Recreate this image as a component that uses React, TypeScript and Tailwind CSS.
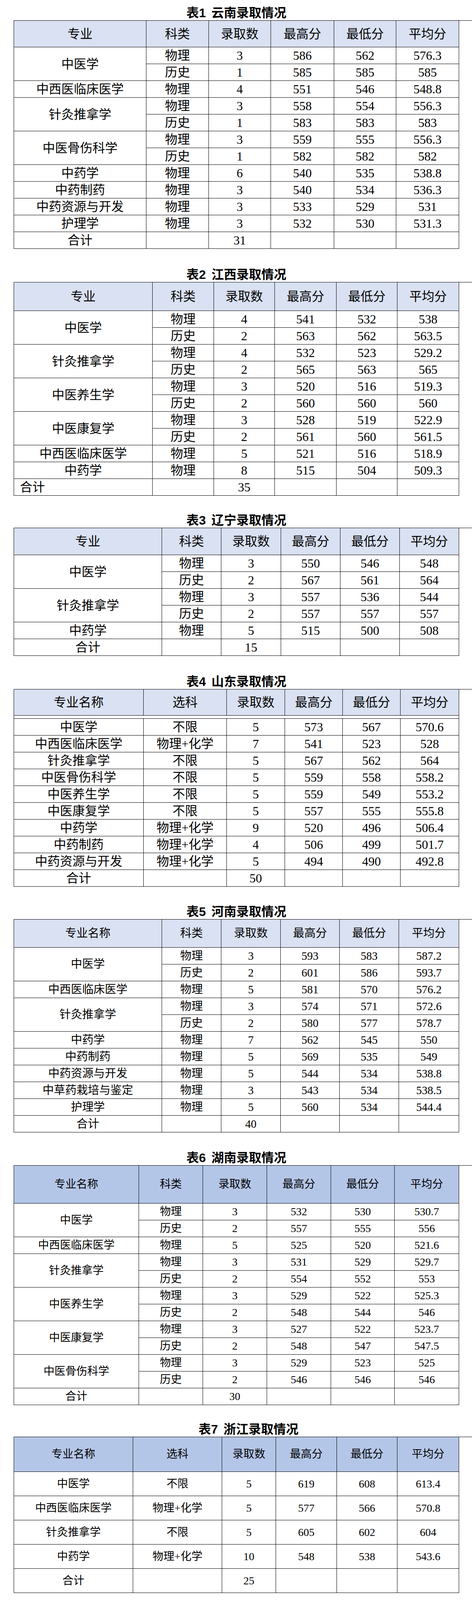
import clsx from 'clsx'

type Row = string[]
type Group = [string, Row[]]

type Sheet = {
  no: string
  name: string
  gap: string
  shift: boolean
  cols: string
  head: string[]
  headH: string
  headBg: string
  rowH: string
  size: string
  groups: Group[]
  total: string
  totalLeft: boolean
  spacer: boolean
}

const H6 = ['专业名称', '科类', '录取数', '最高分', '最低分', '平均分']
const HX = ['专业名称', '选科', '录取数', '最高分', '最低分', '平均分']

const sheets: Sheet[] = [
  {
    no: '1',
    name: '云南录取情况',
    gap: 'pt-[15px]',
    shift: false,
    cols: 'grid-cols-[339px_160px_159px_162px_159px_161px]',
    head: ['专业', '科类', '录取数', '最高分', '最低分', '平均分'],
    headH: 'h-[68px]',
    headBg: 'bg-[#d9e1f2]',
    rowH: 'h-[43px]',
    size: 'text-[32px]',
    groups: [
      ['中医学', [['物理', '3', '586', '562', '576.3'], ['历史', '1', '585', '585', '585']]],
      ['中西医临床医学', [['物理', '4', '551', '546', '548.8']]],
      ['针灸推拿学', [['物理', '3', '558', '554', '556.3'], ['历史', '1', '583', '583', '583']]],
      ['中医骨伤科学', [['物理', '3', '559', '555', '556.3'], ['历史', '1', '582', '582', '582']]],
      ['中药学', [['物理', '6', '540', '535', '538.8']]],
      ['中药制药', [['物理', '3', '540', '534', '536.3']]],
      ['中药资源与开发', [['物理', '3', '533', '529', '531']]],
      ['护理学', [['物理', '3', '532', '530', '531.3']]],
    ],
    total: '31',
    totalLeft: false,
    spacer: false,
  },
  {
    no: '2',
    name: '江西录取情况',
    gap: 'pt-[48px]',
    shift: false,
    cols: 'grid-cols-[355px_157px_156px_158px_156px_158px]',
    head: ['专业', '科类', '录取数', '最高分', '最低分', '平均分'],
    headH: 'h-[73px]',
    headBg: 'bg-[#d9e1f2]',
    rowH: 'h-[43px]',
    size: 'text-[32px]',
    groups: [
      ['中医学', [['物理', '4', '541', '532', '538'], ['历史', '2', '563', '562', '563.5']]],
      ['针灸推拿学', [['物理', '4', '532', '523', '529.2'], ['历史', '2', '565', '563', '565']]],
      ['中医养生学', [['物理', '3', '520', '516', '519.3'], ['历史', '2', '560', '560', '560']]],
      ['中医康复学', [['物理', '3', '528', '519', '522.9'], ['历史', '2', '561', '560', '561.5']]],
      ['中西医临床医学', [['物理', '5', '521', '516', '518.9']]],
      ['中药学', [['物理', '8', '515', '504', '509.3']]],
    ],
    total: '35',
    totalLeft: true,
    spacer: false,
  },
  {
    no: '3',
    name: '辽宁录取情况',
    gap: 'pt-[45px]',
    shift: false,
    cols: 'grid-cols-[379px_152px_153px_152px_152px_152px]',
    head: ['专业', '科类', '录取数', '最高分', '最低分', '平均分'],
    headH: 'h-[69px]',
    headBg: 'bg-[#d9e1f2]',
    rowH: 'h-[43px]',
    size: 'text-[32px]',
    groups: [
      ['中医学', [['物理', '3', '550', '546', '548'], ['历史', '2', '567', '561', '564']]],
      ['针灸推拿学', [['物理', '3', '557', '536', '544'], ['历史', '2', '557', '557', '557']]],
      ['中药学', [['物理', '5', '515', '500', '508']]],
    ],
    total: '15',
    totalLeft: false,
    spacer: false,
  },
  {
    no: '4',
    name: '山东录取情况',
    gap: 'pt-[48px]',
    shift: false,
    cols: 'grid-cols-[332px_213px_149px_148px_148px_150px]',
    head: HX,
    headH: 'h-[67px]',
    headBg: 'bg-[#d9e1f2]',
    rowH: 'h-[43px]',
    size: 'text-[32px]',
    groups: [
      ['中医学', [['不限', '5', '573', '567', '570.6']]],
      ['中西医临床医学', [['物理+化学', '7', '541', '523', '528']]],
      ['针灸推拿学', [['不限', '5', '567', '562', '564']]],
      ['中医骨伤科学', [['不限', '5', '559', '558', '558.2']]],
      ['中医养生学', [['不限', '5', '559', '549', '553.2']]],
      ['中医康复学', [['不限', '5', '557', '555', '555.8']]],
      ['中药学', [['物理+化学', '9', '520', '496', '506.4']]],
      ['中药制药', [['物理+化学', '4', '506', '499', '501.7']]],
      ['中药资源与开发', [['物理+化学', '5', '494', '490', '492.8']]],
    ],
    total: '50',
    totalLeft: false,
    spacer: true,
  },
  {
    no: '5',
    name: '河南录取情况',
    gap: 'pt-[46px]',
    shift: false,
    cols: 'grid-cols-[379px_152px_152px_151px_152px_154px]',
    head: H6,
    headH: 'h-[72px]',
    headBg: 'bg-[#d9e1f2]',
    rowH: 'h-[43px]',
    size: 'text-[29px]',
    groups: [
      ['中医学', [['物理', '3', '593', '583', '587.2'], ['历史', '2', '601', '586', '593.7']]],
      ['中西医临床医学', [['物理', '5', '581', '570', '576.2']]],
      ['针灸推拿学', [['物理', '3', '574', '571', '572.6'], ['历史', '2', '580', '577', '578.7']]],
      ['中药学', [['物理', '7', '562', '545', '550']]],
      ['中药制药', [['物理', '5', '569', '535', '549']]],
      ['中药资源与开发', [['物理', '5', '544', '534', '538.8']]],
      ['中草药栽培与鉴定', [['物理', '3', '543', '534', '538.5']]],
      ['护理学', [['物理', '5', '560', '534', '544.4']]],
    ],
    total: '40',
    totalLeft: false,
    spacer: false,
  },
  {
    no: '6',
    name: '湖南录取情况',
    gap: 'pt-[47px]',
    shift: false,
    cols: 'grid-cols-[320px_164px_164px_164px_163px_165px]',
    head: H6,
    headH: 'h-[97px]',
    headBg: 'bg-[#b4c6e7]',
    rowH: 'h-[43px]',
    size: 'text-[28px]',
    groups: [
      ['中医学', [['物理', '3', '532', '530', '530.7'], ['历史', '2', '557', '555', '556']]],
      ['中西医临床医学', [['物理', '5', '525', '520', '521.6']]],
      ['针灸推拿学', [['物理', '3', '531', '529', '529.7'], ['历史', '2', '554', '552', '553']]],
      ['中医养生学', [['物理', '3', '529', '522', '525.3'], ['历史', '2', '548', '544', '546']]],
      ['中医康复学', [['物理', '3', '527', '522', '523.7'], ['历史', '2', '548', '547', '547.5']]],
      ['中医骨伤科学', [['物理', '3', '529', '523', '525'], ['历史', '2', '546', '546', '546']]],
    ],
    total: '30',
    totalLeft: false,
    spacer: false,
  },
  {
    no: '7',
    name: '浙江录取情况',
    gap: 'pt-[44px]',
    shift: true,
    cols: 'grid-cols-[305px_228px_138px_156px_155px_158px]',
    head: HX,
    headH: 'h-[89px]',
    headBg: 'bg-[#b4c6e7]',
    rowH: 'h-[62px]',
    size: 'text-[28px]',
    groups: [
      ['中医学', [['不限', '5', '619', '608', '613.4']]],
      ['中西医临床医学', [['物理+化学', '5', '577', '566', '570.8']]],
      ['针灸推拿学', [['不限', '5', '605', '602', '604']]],
      ['中药学', [['物理+化学', '10', '548', '538', '543.6']]],
    ],
    total: '25',
    totalLeft: false,
    spacer: false,
  },
  {
    no: '8',
    name: '重庆录取情况',
    gap: 'pt-[50px]',
    shift: true,
    cols: 'grid-cols-[373px_187px_145px_145px_145px_145px]',
    head: ['专业名称', '科类', '录取人数', '最高分', '最低分', '平均分'],
    headH: 'h-[96px]',
    headBg: 'bg-[#b4c6e7]',
    rowH: 'h-[43px]',
    size: 'text-[28px]',
    groups: [
      ['中医学', [['物理', '144', '593', '560', '567.9'], ['历史', '65', '590', '566', '572']]],
      ['中西医临床医学', [['物理', '160', '587', '549', '555.2']]],
      ['针灸推拿学', [['物理', '82', '576', '551', '557.4'], ['历史', '28', '581', '564', '568.4']]],
      ['中医骨伤科学', [['物理', '39', '566', '549', '552.8'], ['历史', '14', '565', '560', '561.8']]],
      ['中医养生学', [['物理', '42', '556', '541', '543.7'], ['历史', '15', '570', '556', '560']]],
      ['中医康复学', [['物理', '42', '561', '545', '547.5'], ['历史', '15', '564', '558', '560.8']]],
      ['中药学', [['物理', '85', '550', '532', '537.3']]],
      ['中药制药', [['物理', '44', '542', '529', '532.1']]],
      ['中药资源与开发', [['物理', '27', '530', '525', '527.3']]],
      ['中草药栽培与鉴定', [['物理', '20', '537', '524', '528.1']]],
      ['健康服务与管理', [['物理', '10', '533', '527', '529.1'], ['历史', '20', '553', '538', '544.2']]],
      ['护理', [['物理', '199', '545', '521', '527.1']]],
    ],
    total: '1051',
    totalLeft: false,
    spacer: false,
  },
  {
    no: '9',
    name: '湖北录取情况',
    gap: 'pt-[46px]',
    shift: true,
    cols: 'grid-cols-[358px_156px_157px_156px_156px_157px]',
    head: H6,
    headH: 'h-[68px]',
    headBg: 'bg-[#b4c6e7]',
    rowH: 'h-[43px]',
    size: 'text-[28px]',
    groups: [
      ['中医学', [['物理', '3', '547', '542', '544.7'], ['历史', '2', '577', '560', '568.5']]],
      ['针灸推拿学', [['物理', '3', '540', '539', '539.3'], ['历史', '2', '561', '559', '560']]],
      ['中西医临床医学', [['物理', '5', '554', '522', '530.8']]],
      ['中药学', [['物理', '5', '526', '510', '515.4']]],
    ],
    total: '20',
    totalLeft: true,
    spacer: false,
  },
  {
    no: '10',
    name: '宁夏录取情况',
    gap: 'pt-[7px]',
    shift: true,
    cols: 'grid-cols-[377px_152px_153px_152px_152px_154px]',
    head: H6,
    headH: 'h-[67px]',
    headBg: 'bg-[#c6d9f1]',
    rowH: 'h-[43px]',
    size: 'text-[28px]',
    groups: [
      ['中医学', [['物理', '3', '504', '479', '492.3'], ['历史', '2', '547', '524', '535.5']]],
      ['中西医临床医学', [['物理', '5', '480', '473', '475.6']]],
    ],
    total: '10',
    totalLeft: false,
    spacer: false,
  },
]

function Cell({ children, className }: { children?: React.ReactNode; className?: string }) {
  return (
    <div className={clsx('flex items-center justify-center border-r border-b border-black leading-none', className)}>
      {children}
    </div>
  )
}

function Sheet({ s }: { s: Sheet }) {
  return (
    <section className={s.gap}>
      <h2
        className={clsx(
          'mb-[1px] ml-[35px] w-[1141px] text-center text-[32px] leading-[36px] font-bold text-black',
          "font-['Liberation_Sans','Noto_Sans_CJK_SC',sans-serif]",
          s.shift && 'pl-[62px]'
        )}
      >
        <span>表{s.no}</span>
        <span className="ml-[14px]">{s.name}</span>
      </h2>
      <div
        className={clsx(
          'ml-[35px] grid border-t border-l border-black text-black',
          "font-['Liberation_Serif','Noto_Sans_CJK_SC',serif]",
          s.cols,
          s.size
        )}
      >
        {s.head.map((h) => (
          <Cell key={h} className={clsx(s.headH, s.headBg)}>
            {h}
          </Cell>
        ))}
        {s.spacer && <div className="col-span-6 h-[8px] border-r border-b border-black" />}
        {s.groups.map(([name, rows]) =>
          rows.map((r, i) => (
            <div key={name + i} className="contents">
              {i === 0 && <Cell className={rows.length === 2 ? 'row-span-2' : s.rowH}>{name}</Cell>}
              {r.map((v, j) => (
                <Cell key={j} className={s.rowH}>
                  {v}
                </Cell>
              ))}
            </div>
          ))
        )}
        <Cell className={clsx(s.rowH, s.totalLeft && 'justify-start pl-[15px]')}>合计</Cell>
        <Cell className={s.rowH} />
        <Cell className={s.rowH}>{s.total}</Cell>
        <Cell className={s.rowH} />
        <Cell className={s.rowH} />
        <Cell className={s.rowH} />
      </div>
    </section>
  )
}

export default function App() {
  return (
    <div className="w-[1209px] bg-white pb-[140px]">
      {sheets.map((s) => (
        <Sheet key={s.no} s={s} />
      ))}
    </div>
  )
}
